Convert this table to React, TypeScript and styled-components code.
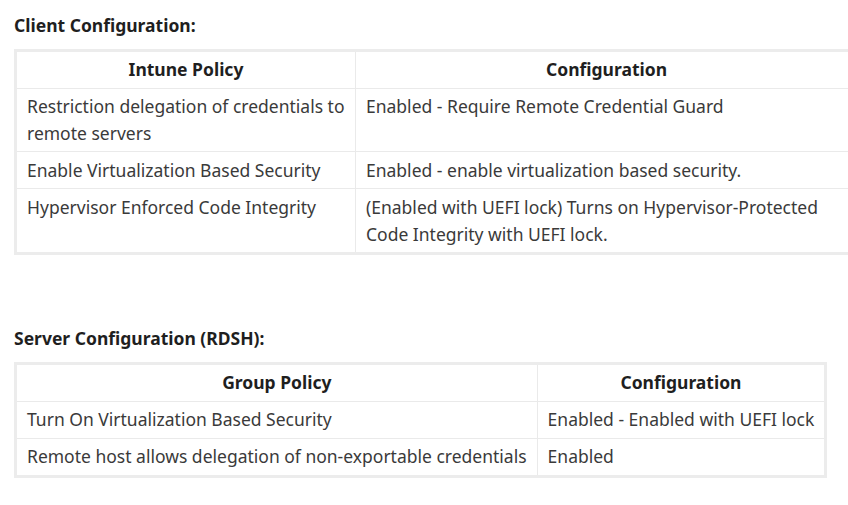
import React from 'react';
import styled, { createGlobalStyle } from 'styled-components';

const GlobalStyle = createGlobalStyle`
  html, body {
    margin: 0;
    padding: 0;
    background: #fff;
    overflow: hidden;
  }
  body {
    font-family: 'Noto Sans', 'Open Sans', sans-serif;
    font-size: 17.5px;
    line-height: 26.67px;
    color: #3a3a3a;
  }
`;

type Row = [string, string];

const clientRows: Row[] = [
  ['Restriction delegation of credentials to remote servers', 'Enabled - Require Remote Credential Guard'],
  ['Enable Virtualization Based Security', 'Enabled - enable virtualization based security.'],
  [
    'Hypervisor Enforced Code Integrity',
    '(Enabled with UEFI lock) Turns on Hypervisor-Protected Code Integrity with UEFI lock.',
  ],
];

const serverRows: Row[] = [
  ['Turn On Virtualization Based Security', 'Enabled - Enabled with UEFI lock'],
  ['Remote host allows delegation of non-exportable credentials', 'Enabled'],
];

type ConfigTableProps = {
  policy: string;
  rows: Row[];
  width?: string;
  firstCol?: string;
};

function ConfigTable(props: ConfigTableProps) {
  return (
    <Table $width={props.width} $fixed={!!props.width}>
      <thead>
        <tr>
          <HeadCell $width={props.firstCol}>{props.policy}</HeadCell>
          <HeadCell>Configuration</HeadCell>
        </tr>
      </thead>
      <tbody>
        {props.rows.map((row) => (
          <tr key={row[0]}>
            <Cell>{row[0]}</Cell>
            <Cell>{row[1]}</Cell>
          </tr>
        ))}
      </tbody>
    </Table>
  );
}

export default function App() {
  return (
    <>
      <GlobalStyle />
      <Page>
        <SectionTitle>Client Configuration:</SectionTitle>
        <ConfigTable policy="Intune Policy" rows={clientRows} width="846px" firstCol="339px" />
        <SectionTitle $mt="70px">Server Configuration (RDSH):</SectionTitle>
        <ConfigTable policy="Group Policy" rows={serverRows} />
      </Page>
    </>
  );
}

const Page = styled.div`
  padding: 12px 0 0 14px;
  width: 1000px;
`;

const SectionTitle = styled.h3<{ $mt?: string }>`
  margin: ${(p) => p.$mt || '0'} 0 10px;
  font-size: 17.5px;
  font-weight: 700;
  line-height: 26.67px;
  color: #1f1f1f;
`;

const Table = styled.table<{ $width?: string; $fixed?: boolean }>`
  border-collapse: separate;
  border-spacing: 0;
  border: 3px solid #ececec;
  width: ${(p) => p.$width || 'auto'};
  table-layout: ${(p) => (p.$fixed ? 'fixed' : 'auto')};

  tr:last-child td {
    border-bottom: none;
  }
  th:last-child,
  td:last-child {
    border-right: none;
  }
`;

const HeadCell = styled.th<{ $width?: string }>`
  box-sizing: border-box;
  width: ${(p) => p.$width || 'auto'};
  padding: 4.67px 10px;
  text-align: center;
  vertical-align: top;
  font-weight: 700;
  color: #1f1f1f;
  border-right: 1px solid #eaeaea;
  border-bottom: 1px solid #eaeaea;
`;

const Cell = styled.td`
  padding: 4.67px 10px 4.67px 10px;
  text-align: left;
  vertical-align: top;
  border-right: 1px solid #eaeaea;
  border-bottom: 1px solid #eaeaea;
`;
